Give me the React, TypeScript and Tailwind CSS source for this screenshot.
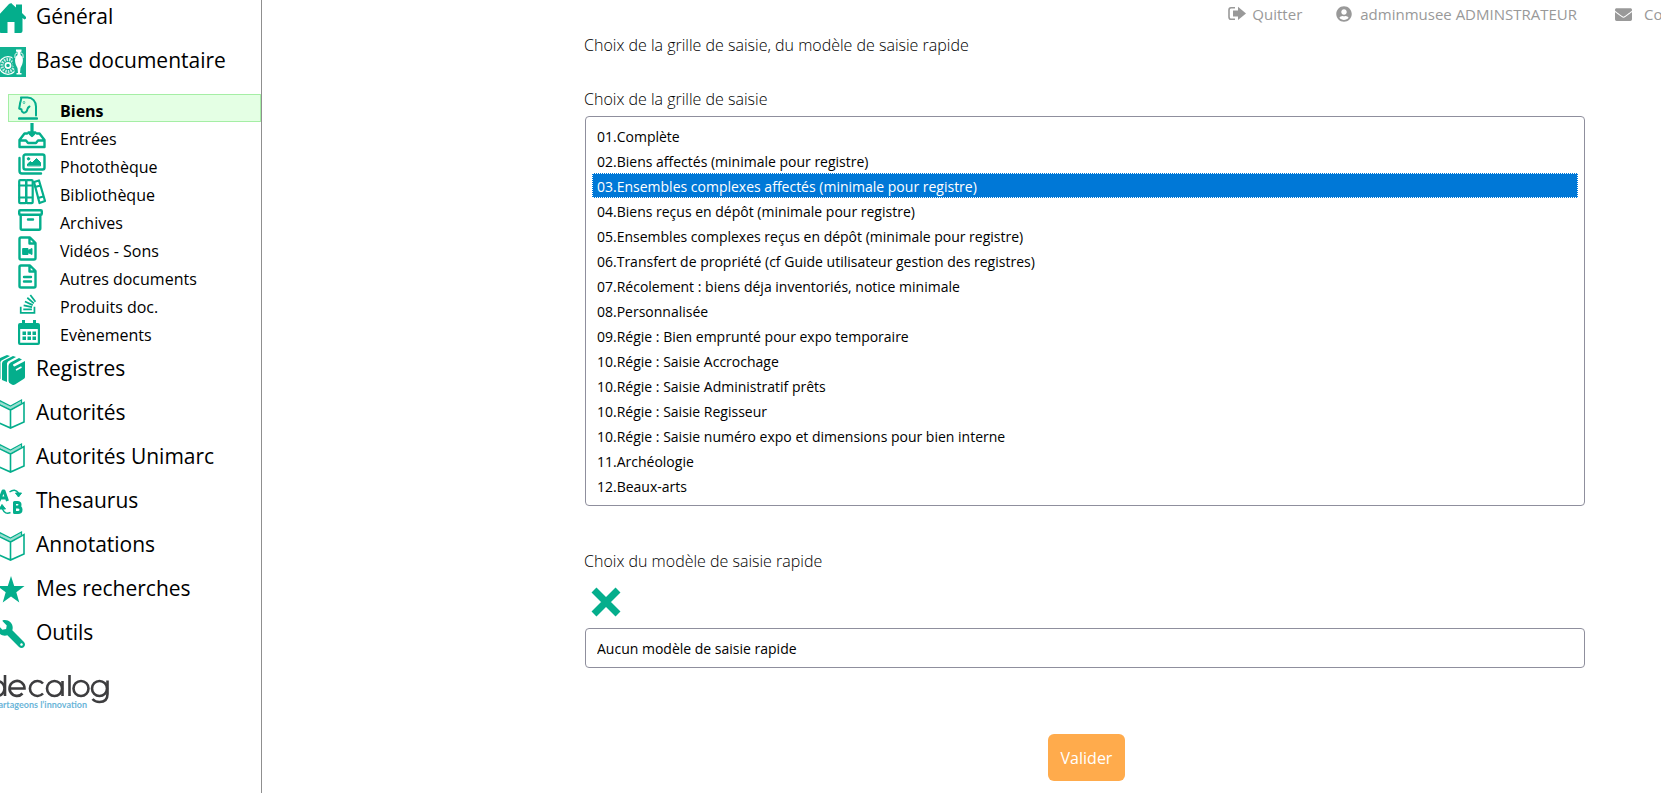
import { useState } from "react";
import type { ReactNode } from "react";
import { FaEnvelope, FaStackOverflow, FaUserCircle, FaWrench } from "react-icons/fa";

const stroke = {
  fill: "none",
  stroke: "currentColor",
  strokeWidth: 2.4,
  strokeLinecap: "round",
  strokeLinejoin: "round",
} as const;

const HomeIcon = () => (
  <svg viewBox="0 0 30 30" className="size-[30px]" fill="currentColor">
    <path d="M15 0 L20 4.500 V1.500 H26 V10 L30 14 V15.500 L28.500 16.500 L26.500 15 V28 Q26.500 30 24.500 30 H18.500 V19 H11.500 V30 H5.500 Q3.500 30 3.500 28 V15 L1.500 16.500 L0 15 L13 1 Q15 -0.500 17 1Z" />
  </svg>
);

const MuseumIcon = () => (
  <svg viewBox="0 0 30 30" className="size-[30px]">
    <rect width="30" height="30" fill="#12b292" />
    <g fill="none" stroke="#fff">
      <circle cx="12" cy="18.500" r="8.800" strokeWidth="1.200" />
      <circle cx="12" cy="18.500" r="6" strokeWidth="3" strokeDasharray="1.600 1" opacity=".75" />
      <circle cx="12" cy="18.500" r="2.600" strokeWidth="1.600" />
    </g>
    <path d="M16.500 8 H29 V28 H18.500 V22 L16.500 17Z" fill="#12b292" />
    <path
      d="M20 2.500 H25.500 V4.500 L24.500 5 V8 C28 10 27.500 16 24.500 21 L24 26 H25.500 V27.500 H20.500 V26 H22 L21.500 21 C18.500 16 18 10 21.500 8 V5 L20 4.500Z"
      fill="#fff"
    />
    <path d="M21 6 Q18.500 6 19 11 M25 6 Q27.500 6 27 11" fill="none" stroke="#fff" />
  </svg>
);

const HeadIcon = () => (
  <svg viewBox="0 0 20 24" className="h-6 w-5" {...stroke} strokeWidth="2">
    <path d="M3 1.500 H9.500 C14.500 1.500 18 5.500 18 10.500 V19.500 M3 1.500 C4 3.500 2 5.500 2 8 L1.200 12.500 L3.500 13.500 C3.500 17 6.500 17.500 8.500 15.500 C10 13.500 8.500 12 11.500 10.500" />
    <path d="M1 22.500 H19" strokeWidth="2.400" />
    <circle cx="6" cy="6.500" r=".3" />
  </svg>
);

const InboxIcon = () => (
  <svg viewBox="0 0 28 26" className="h-[26px] w-7" {...stroke}>
    <path d="M9 10.500 H6.500 L1.500 17 V24 H26.500 V17 L21.500 10.500 H19 M1.500 17.500 H8 L10 20 H18 L20 17.500 H26.500" />
    <path d="M14 0 V12" strokeWidth="3.200" strokeLinecap="butt" />
    <path d="M10.500 9.500 L14 13 L17.500 9.500Z" fill="currentColor" />
  </svg>
);

const PhotosIcon = () => (
  <svg viewBox="0 0 28 22" className="h-[22px] w-7" {...stroke}>
    <rect x="5.500" y="1.500" width="21" height="15" rx="2" />
    <path d="M1.500 5 V18 Q1.500 20.500 4 20.500 H23" />
    <path d="M9.500 12.500 V11 L12.500 8.500 L14 10 L18.500 5.500 L22.500 9.500 V12.500Z" fill="currentColor" strokeWidth="1" />
    <circle cx="10.500" cy="5.800" r="1.200" fill="currentColor" strokeWidth="1" />
  </svg>
);

const BooksIcon = () => (
  <svg viewBox="0 0 28 26" className="h-[26px] w-7" {...stroke} strokeWidth="2.200">
    <rect x="1.200" y="1.200" width="7" height="23" rx="1" />
    <rect x="8.200" y="1.200" width="6.500" height="23" rx="1" />
    <path d="M1.500 6.500 H14 M1.500 18.500 H14" />
    <path d="M16 3 L21 1.500 L27 22 L21.500 24Z M17 8 L22.500 6.500 M20 19 L25.500 17.500" />
  </svg>
);

const ArchiveIcon = () => (
  <svg viewBox="0 0 25 22" className="h-[22px] w-[25px]" {...stroke}>
    <rect x="1.200" y="1.200" width="22.600" height="4.600" rx="1" />
    <path d="M2.700 6 V19.300 Q2.700 20.800 4 20.800 H21 Q22.300 20.800 22.300 19.300 V6 M10 10.500 H15" />
  </svg>
);

const FileShape = ({ children }: { children: ReactNode }) => (
  <svg viewBox="0 0 19 25" className="h-[25px] w-[19px]" {...stroke}>
    <path d="M3 1.500 H12 L17.500 7 V22 Q17.500 23.500 16 23.500 H3 Q1.500 23.500 1.500 22 V3 Q1.500 1.500 3 1.500Z M11.500 1.500 V7.500 H17.500" />
    {children}
  </svg>
);

const VideoIcon = () => (
  <FileShape>
    <path d="M5 12.500 H10 V14.500 L14 12.500 V18.500 L10 16.500 V18.500 H5Z" fill="currentColor" strokeWidth="1" />
  </FileShape>
);

const DocIcon = () => (
  <FileShape>
    <path d="M6 13 H13 M6 17.500 H13" />
  </FileShape>
);

const CalendarIcon = () => (
  <svg viewBox="0 0 22 25" className="h-[25px] w-[22px]" fill="currentColor">
    <path d="M4 0 H7 V3 H15 V0 H18 V3 H20 Q22 3 22 5 V23 Q22 25 20 25 H2 Q0 25 0 23 V5 Q0 3 2 3 H4Z M2.200 9 V22.800 H19.800 V9Z" fillRule="evenodd" />
    <path d="M4.500 11.500 H8 V15 H4.500Z M9.500 11.500 H13 V15 H9.500Z M14.500 11.500 H18 V15 H14.500Z M4.500 16.500 H8 V20 H4.500Z M9.500 16.500 H13 V20 H9.500Z M14.500 16.500 H18 V20 H14.500Z" />
  </svg>
);

const RegistersIcon = () => (
  <svg viewBox="0 0 30 30" className="size-[30px]" fill="currentColor">
    <path d="M0 7 Q0 5 2 4 L11 0 L14 1 L5.500 5.500 Q4 6.500 4.500 8.500 V24 L0 22Z" />
    <path d="M6 8.500 Q6 6.500 8 5.500 L17 1 L20 2 L12 6.500 Q10.500 8 11 10 V27 L6 25Z" />
    <path d="M12.500 11 Q12.500 8.500 14.500 7.500 L23 3 L26 4.500 L17 9.500 Q17 11.500 18.500 11.500 L29 6 V22 Q29 23 28 23.700 L19 29.500 Q17 30.500 15 29 Q12.500 28 12.500 26Z" />
    <path d="M20 15 L25.500 12" stroke="#fff" strokeWidth="1.500" />
  </svg>
);

const BookIcon = () => (
  <svg viewBox="0 0 30 30" className="size-[30px]" fill="none" stroke="currentColor" strokeWidth="1.600">
    <path d="M14.500 11 L1 4.500 V23 L14.500 29 L28 23 V3.500 L14.500 11 V29" />
    <path d="M3.500 4.500 V1.500 L14.500 7 L25.500 1 V4" strokeWidth="1.200" />
    <path d="M3.500 3 L14.500 9 L25.500 3" strokeWidth="2.400" opacity=".4" />
  </svg>
);

const ThesaurusIcon = () => (
  <svg viewBox="0 0 30 30" className="size-[30px]" {...stroke} strokeLinecap="butt">
    <path d="M3 14 L7 4 H8 L11.500 14 M4.500 11 H10" strokeWidth="3" />
    <path d="M18.500 15.500 H21.500 Q24 15.500 24 17.700 Q24 20 21.500 20 Q25 20 25 22.700 Q25 25.500 22 25.500 H18.500Z M18.500 20 H22" strokeWidth="3" />
    <path d="M13.500 5 Q19 1 22.500 6" strokeWidth="1.500" />
    <path d="M19.500 6 H25.500 L22.500 10Z" fill="currentColor" strokeWidth="1" />
    <path d="M14.500 25.500 Q9 28 6.500 22" strokeWidth="1.500" />
    <path d="M3.500 22 H9.500 L6 17.500Z" fill="currentColor" strokeWidth="1" />
  </svg>
);

const StarIcon = () => (
  <svg viewBox="0 0 28 28" className="size-7" fill="currentColor">
    <path d="M14 0 L17.200 10 H27.500 L19.300 16.300 L22.300 26.500 L14 20.400 L5.700 26.500 L8.700 16.300 L.5 10 H10.800Z" />
  </svg>
);

const CrossIcon = () => (
  <svg viewBox="0 0 30 30" className="size-[30px]" fill="none" stroke="currentColor" strokeWidth="7">
    <path d="M3 3 L27 27 M27 3 L3 27" />
  </svg>
);

const QuitIcon = () => (
  <svg viewBox="0 0 18 16" className="h-4 w-[18px]" fill="currentColor">
    <path d="M7 1.700 H3 Q1 1.700 1 4 V11 Q1 13.300 3 13.300 H7" fill="none" stroke="currentColor" strokeWidth="1.600" />
    <path d="M5 4.500 H10 V.8 L18 7.500 L10 14 V10.500 H5Z" />
  </svg>
);

const subItems = [
  { label: "Biens", icon: <HeadIcon /> },
  { label: "Entrées", icon: <InboxIcon /> },
  { label: "Photothèque", icon: <PhotosIcon /> },
  { label: "Bibliothèque", icon: <BooksIcon /> },
  { label: "Archives", icon: <ArchiveIcon /> },
  { label: "Vidéos - Sons", icon: <VideoIcon /> },
  { label: "Autres documents", icon: <DocIcon /> },
  { label: "Produits doc.", icon: <FaStackOverflow className="h-[22px] w-5" /> },
  { label: "Evènements", icon: <CalendarIcon /> },
];

const lowerItems = [
  { label: "Registres", icon: <RegistersIcon /> },
  { label: "Autorités", icon: <BookIcon /> },
  { label: "Autorités Unimarc", icon: <BookIcon /> },
  { label: "Thesaurus", icon: <ThesaurusIcon /> },
  { label: "Annotations", icon: <BookIcon /> },
  { label: "Mes recherches", icon: <StarIcon /> },
  { label: "Outils", icon: <FaWrench className="size-7 -scale-x-100" /> },
];

const grids = [
  "01.Complète",
  "02.Biens affectés (minimale pour registre)",
  "03.Ensembles complexes affectés (minimale pour registre)",
  "04.Biens reçus en dépôt (minimale pour registre)",
  "05.Ensembles complexes reçus en dépôt (minimale pour registre)",
  "06.Transfert de propriété (cf Guide utilisateur gestion des registres)",
  "07.Récolement : biens déja inventoriés, notice minimale",
  "08.Personnalisée",
  "09.Régie : Bien emprunté pour expo temporaire",
  "10.Régie : Saisie Accrochage",
  "10.Régie : Saisie Administratif prêts",
  "10.Régie : Saisie Regisseur",
  "10.Régie : Saisie numéro expo et dimensions pour bien interne",
  "11.Archéologie",
  "12.Beaux-arts",
];

function MainItem({ label, icon }: { label: string; icon: ReactNode }) {
  return (
    <a href="#" className="flex h-11 items-center gap-[10px] text-[21px] text-black">
      <span className="flex w-[30px] shrink-0 justify-center pt-1 text-[#04ae8c]">{icon}</span>
      <span className="pt-px">{label}</span>
    </a>
  );
}

export default function App() {
  const [grid, setGrid] = useState(grids[2]);

  return (
    <div className="flex min-h-screen overflow-hidden bg-white font-['Open_Sans','Noto_Sans',sans-serif]">
      <aside className="w-[262px] shrink-0 overflow-hidden border-r border-[#8f8f8f]">
        <nav className="-mt-[6px] -ml-1">
          <MainItem label="Général" icon={<HomeIcon />} />
          <MainItem label="Base documentaire" icon={<MuseumIcon />} />
          <ul className="mt-3 ml-3">
            {subItems.map(({ label, icon }, i) => (
              <li key={label}>
                <a
                  href="#"
                  className={
                    i === 0
                      ? "flex h-7 items-center border border-[#a5eea5] bg-[#e4ffe4] pl-[9px] text-base font-bold text-black"
                      : "flex h-7 items-center pl-[10px] text-base text-black"
                  }
                >
                  <span className="flex w-[42px] shrink-0 items-center text-[#04ae8c]">{icon}</span>
                  <span className="pt-[5px]">{label}</span>
                </a>
              </li>
            ))}
          </ul>
          {lowerItems.map((item) => (
            <MainItem key={item.label} {...item} />
          ))}
        </nav>
        <a href="#" aria-label="decalog" className="mt-5 block">
          <svg viewBox="0 0 112 40" className="h-10 w-28">
            <g fill="none" stroke="#3d3d3f" strokeWidth="2.600">
              <path d="M5 1 V22" />
              <circle cx="-3" cy="14.500" r="7.500" />
              <path d="M10 14.500 H24.500 A7.500 7.500 0 1 0 22.500 19.500" />
              <path d="M43 9.500 A7.500 7.500 0 1 0 43 19.500" />
              <circle cx="54.500" cy="14.500" r="7.500" />
              <path d="M62.500 7 V22 M69.500 1 V22" />
              <circle cx="81" cy="14.500" r="7.500" />
              <circle cx="99.500" cy="14.500" r="7.500" />
              <path d="M107.500 6.500 V20 Q107.500 28 99.500 28 Q95 28 92.500 25" />
            </g>
            <text x="87" y="34" textAnchor="end" fontSize="9" fill="#6bb5d8" className="font-['Lato',sans-serif] font-bold">
              partageons l’innovation
            </text>
          </svg>
        </a>
      </aside>

      <div className="min-w-0 flex-1 overflow-hidden">
        <header className="flex h-7 items-center justify-end text-[15px] whitespace-nowrap text-[#999]">
          <a href="#" className="mr-[34px] flex items-center gap-[6px]">
            <QuitIcon />
            Quitter
          </a>
          <a href="#" className="mr-[38px] flex items-center gap-2">
            <FaUserCircle className="size-4" />
            adminmusee ADMINSTRATEUR
          </a>
          <a href="#" className="-mr-[52px] flex w-[98px] items-center gap-3">
            <FaEnvelope className="size-[17px]" />
            Contact
          </a>
        </header>

        <main className="pr-[76px] pl-[322px]">
          <form onSubmit={(e) => e.preventDefault()}>
            <h1 className="pt-[3px] text-base leading-7 font-light text-black">
              Choix de la grille de saisie, du modèle de saisie rapide
            </h1>
            <label htmlFor="grille" className="mt-[26px] block text-base leading-7 font-light text-black">
              Choix de la grille de saisie
            </label>
            <div className="pl-px">
              <select
                id="grille"
                size={15}
                value={grid}
                onChange={(e) => setGrid(e.target.value)}
                className="mt-[3px] block w-full overflow-hidden rounded-[4px] border border-[#8f8f9d] bg-white px-[6px] pt-[6px] pb-[7px] text-sm text-black outline-none"
              >
                {grids.map((g) => (
                  <option
                    key={g}
                    value={g}
                    className="h-[25px] px-[5px] pt-1 pb-0 leading-[21px] checked:bg-linear-to-r checked:from-[#0078d7] checked:to-[#0078d7] checked:outline-1 checked:-outline-offset-1 checked:outline-white checked:outline-dotted checked:[-webkit-text-fill-color:white]"
                  >
                    {g}
                  </option>
                ))}
              </select>
            </div>

            <label htmlFor="modele" className="mt-[41px] block text-base leading-7 font-light text-black">
              Choix du modèle de saisie rapide
            </label>
            <button type="button" aria-label="Effacer" className="mt-3 ml-[7px] block text-[#04ae8c]">
              <CrossIcon />
            </button>
            <div className="pl-px">
              <select
                id="modele"
                className="mt-[11px] block h-10 w-full appearance-none rounded-[4px] border border-[#8f8f9d] bg-white px-[11px] pt-px text-sm text-black"
              >
                <option>Aucun modèle de saisie rapide</option>
              </select>
            </div>

            <div className="mt-[66px] flex justify-center pl-1">
              <button type="submit" className="h-[47px] rounded-md bg-[#ffab4c] px-[13px] text-base text-white">
                Valider
              </button>
            </div>
          </form>
        </main>
      </div>
    </div>
  );
}
